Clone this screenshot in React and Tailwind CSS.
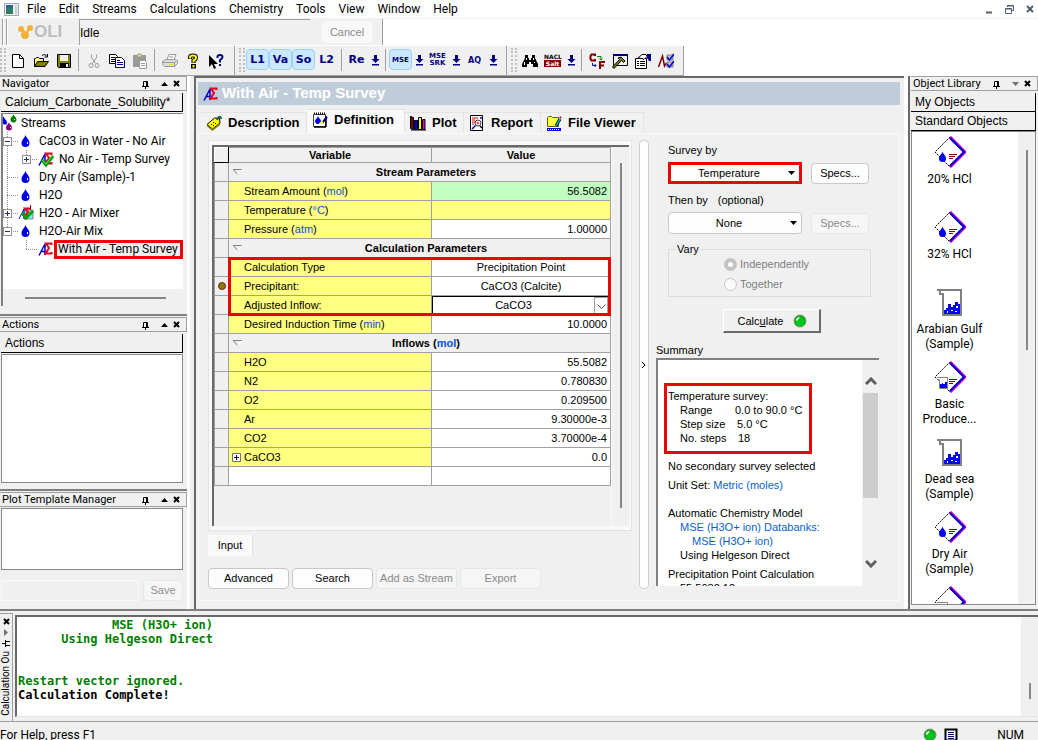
import React from "react";
import clsx from "clsx";

const menus = ["File", "Edit", "Streams", "Calculations", "Chemistry", "Tools", "View", "Window", "Help"];

const uiFont = "font-[Roboto,sans-serif]";
const arial = "font-['Liberation_Sans',Arial,sans-serif]";

/* ---------- small drawings ---------- */

const Svg = ({ w = 16, h = 16, className, children }) => (
  <svg
    width={w}
    height={h}
    viewBox={`0 0 ${w} ${h}`}
    fill="none"
    className={clsx("shrink-0", className)}
    aria-hidden="true"
  >
    {children}
  </svg>
);

const NewIcon = () => (
  <Svg>
    <path d="M2.500 1.500h7l4 4v9h-11z" fill="#fff" stroke="#000" />
    <path d="M9.500 1.500v4h4" stroke="#000" />
  </Svg>
);

const OpenIcon = () => (
  <Svg>
    <path d="M1.5 13.5v-8h1l1-1h2l1 1h4v3" fill="#ffff80" stroke="#000" />
    <path d="M1.5 13.5l3-5h11l-3.500 5z" fill="#808000" stroke="#000" />
    <path d="M9 2.500c2-1.500 4-1 5 1M14.500 1v3h-3" stroke="#000" />
  </Svg>
);

const SaveIcon = () => (
  <Svg>
    <path d="M1.500 1.500h13v13h-12l-1-1z" fill="#808000" stroke="#000" />
    <path d="M4 2h8v6H4z" fill="#f0f0f0" />
    <path d="M4 10h9v4H4z" fill="#000" />
    <path d="M10 11h2v3h-2z" fill="#f0f0f0" />
  </Svg>
);

const CutIcon = () => (
  <Svg>
    <path d="M5.500 1.500v3l4 6M10.500 1.500v3l-4 6" stroke="#9a9a9a" />
    <circle cx="5" cy="12.500" r="2" stroke="#9a9a9a" />
    <circle cx="11" cy="12.500" r="2" stroke="#9a9a9a" />
  </Svg>
);

const CopyIcon = () => (
  <Svg>
    <path d="M.5 1.500h6l2 2v7h-8z" fill="#fff" stroke="#000" />
    <path d="M2 4.500h4M2 6.500h5M2 8.500h4" stroke="#000" />
    <path d="M6.500 4.500h6l3 3v7h-9z" fill="#fff" stroke="#000080" />
    <path d="M8 7.500h3M8 9.500h6M8 11.500h6" stroke="#000080" />
  </Svg>
);

const PasteIcon = () => (
  <Svg>
    <path d="M1 2h13v12H1z" fill="#9a9a9a" />
    <path d="M5 3l1-2h3l1 2v1H5z" fill="#e8e060" stroke="#9a9a9a" />
    <path d="M7.500 7.500h5l2 2v6h-7z" fill="#fff" stroke="#9a9a9a" />
    <path d="M9 10.500h4M9 12.500h4" stroke="#9a9a9a" />
  </Svg>
);

const PrintIcon = () => (
  <Svg>
    <path d="M5 6.500l2-5h7l-2 5" fill="#fff" stroke="#9a9a9a" />
    <path d="M7 4h4" stroke="#9a9a9a" />
    <path d="M.5 8.500l3-2h10l2 1v3l-3 3h-10l-2-2z" fill="#ddd" stroke="#9a9a9a" />
    <path d="M1 9.500h11.500v4M12.500 9.500l2-2" stroke="#9a9a9a" />
    <path d="M7 11h4v1H7z" fill="#e8e000" />
  </Svg>
);

const HelpIcon = () => (
  <Svg>
    <path d="M5 6V4.500Q5 2.500 8 2.500t3 2Q11 6.500 8.500 7.500V10" stroke="#000" strokeWidth="4" />
    <path d="M5 5.500V4.500Q5 2.500 8 2.500t3 2Q11 6.500 8.500 7.500V9.500" stroke="#ffff00" strokeWidth="2" />
    <path d="M6 11h5v4.500H6z" fill="#000" />
    <path d="M7.500 12h2v2.500h-2z" fill="#ffff00" />
  </Svg>
);

const ContextHelpIcon = () => (
  <Svg>
    <path d="M1 2v12l3-3 2 5 2-1-2-4h4z" fill="#000" />
    <path d="M9.500 5V3.500Q9.500 2 12 2t2.500 2q0 1.500-2.500 3v2.500" stroke="#000080" strokeWidth="2" />
    <path d="M11 11h2v2h-2z" fill="#000080" />
  </Svg>
);

const DownArrow = () => (
  <Svg w={9} h={12}>
    <path d="M3 1h3v4h2.500L4.500 9 .5 5H3zM1 10h7v1.500H1z" fill="#000080" />
  </Svg>
);

const BinocularsIcon = () => (
  <Svg>
    <path d="M3 2h3v3h1v2h2V5h1V2h3v3l3 6v3h-5v-3H9V9H7v2H5v3H0v-3l3-6z" fill="#000" />
    <path d="M4.500 5v2M11.500 5v2M2.500 9v3M12.500 9v1" stroke="#fff" />
  </Svg>
);

const ConvertIcon = () => (
  <Svg>
    <path d="M6 3V1.500H2.500L1.500 3v3l1 1.500H6V6" stroke="#800000" strokeWidth="2" />
    <path d="M11 16V9h5M11 12.500h4" stroke="#800000" strokeWidth="2" />
    <path d="M8 3.500h4V7M10.500 5.500L12 7l1.500-1.500" stroke="#008000" />
    <path d="M3.500 10v2.500H7M5.500 11L7 12.500 5.500 14" stroke="#0000ff" />
  </Svg>
);

const HammerIcon = () => (
  <Svg>
    <path d="M1.500 1.500h14v11h-14z" fill="#f0f0f0" stroke="#000" />
    <path d="M1 1h15v2H1z" fill="#000080" />
    <path d="M6 5l3-1 4 4-1.500 1.500-2-2-7.500 8L.5 14l7-7.500z" fill="#808000" stroke="#000" />
  </Svg>
);

const PropertiesIcon = () => (
  <Svg>
    <path d="M.5 5.500h11v10H.5z" fill="#fff" stroke="#000" />
    <path d="M2 8.500h2M5 8.500h5M2 10.500h2M5 10.500h5M2 12.500h2M5 12.500h5" stroke="#000" />
    <path d="M3 5l4-3.500h4l1 2-3 3-2-1z" fill="#fff" stroke="#000" />
    <path d="M12 1h4v7h-2l-2-3z" fill="#000080" />
  </Svg>
);

const ChecksIcon = () => (
  <Svg>
    <path d="M.5 14L4.500 3l2 10 2-3" stroke="#800000" strokeWidth="1.500" />
    <path d="M9 2h6v5H9zM9 9h6v5H9z" fill="#c0c0c0" stroke="#808080" />
    <path d="M9 4l2.500 3L16 1M9 11l2.500 3L16 8" stroke="#0000e0" strokeWidth="1.500" />
  </Svg>
);

const SurveyIcon = ({ checked }) => (
  <Svg>
    <path d="M1 14.500L7 3v11M3 10.500h4" stroke="#0000c8" strokeWidth="1.500" />
    <path d="M13.500 4V2.500H8L11 7l-3.500 5.500h6V11" stroke="#e8001c" strokeWidth="2" />
    {checked && <path d="M4 9l4 5 7-9" stroke="#00a000" strokeWidth="3" />}
    {checked && <path d="M4 9l4 4 6-8" stroke="#60e060" />}
  </Svg>
);

const MixerIcon = () => (
  <Svg>
    <path d="M6 5h9v9H6z" fill="#80e8f0" stroke="#808080" />
    <path d="M1 14L6 4v10M12 5V3.500H7l3 3.500-3 4M12.500 0v4" stroke="#0000c8" />
    <path d="M12 5V3.500H7l3 3.500-3 4h4" stroke="#e8001c" strokeWidth="2" />
    <path d="M4 8l4 5 7-7" stroke="#00a000" strokeWidth="3" />
    <path d="M12.500 0v4" stroke="#800000" />
  </Svg>
);

const DropIcon = () => (
  <Svg>
    <path d="M7.500 1.500c0 3-4 5-4 8.500a4 4 0 008 0c0-3.500-4-5.500-4-8.500z" fill="#0000f0" />
    <path d="M9 9h1v2H9z" fill="#fff" />
  </Svg>
);

const StreamsIcon = () => (
  <Svg w={14} h={18}>
    <path d="M1 3c0 2 3 3 3 5.500S2 11 0 10V3z" fill="#0000f0" />
    <path d="M10.500 0c0 2-3 3-3 5.500a3 3 0 006 0c0-2.500-3-3.500-3-5.500z" fill="#008000" />
    <path d="M6 8c0 2-3 3-3 5.500a3 3 0 006 0C9 11 6 10 6 8z" fill="#800080" />
    <path d="M11 5h1v1h-1zM7 13h1v1H7z" fill="#fff" />
  </Svg>
);

const TagIcon = () => (
  <Svg>
    <path d="M1 9.500L8.500 3l5 .5.5 4.500L6.500 14z" fill="#ffff00" stroke="#000" />
    <path d="M1 10.500l5.500 4.500L14 9" stroke="#808000" strokeWidth="1.500" />
    <path d="M5 9l1 1M7 7l1 1M7 10l1 1M9 8l1 1" stroke="#000" />
    <path d="M11 5c1-4 4-4 4-1" stroke="#206060" strokeWidth="2" />
  </Svg>
);

const NotepadIcon = () => (
  <Svg>
    <path d="M1.500 2.500h12v12h-12z" fill="#fff" stroke="#404040" />
    <path d="M2 1.500h12" stroke="#000" strokeDasharray="1 1" strokeWidth="2" />
    <path d="M2 15h12M14 4v11" stroke="#000" strokeWidth="1.500" />
    <path d="M6 4c0 2-3 3-3 5a3 3 0 006 0c0-2-3-3-3-5z" fill="#0000f0" />
    <path d="M10 11l5-6" stroke="#000080" strokeWidth="2" />
    <path d="M8 10l3-1v3H7z" fill="#ffff00" />
  </Svg>
);

const PlotIcon = () => (
  <Svg>
    <path d="M.5 1.500l3 1v12l-3-1z" fill="#800000" stroke="#000" />
    <path d="M4.500 5.500h3v9h-3z" fill="#0000e0" stroke="#000" />
    <path d="M8.500 2.500h3v12h-3z" fill="#ffff00" stroke="#000" />
    <path d="M12.500 4.500h2.500v10h-2.500z" fill="#e000e0" stroke="#000" />
    <path d="M1 15h15" stroke="#000" />
  </Svg>
);

const ReportIcon = () => (
  <Svg>
    <path d="M1.500.500h12v15h-12z" fill="#fff" stroke="#000" />
    <path d="M3 3h6M3 5h3M3 7h3M3 9h2" stroke="#e00000" />
    <circle cx="9" cy="8" r="3" fill="#fff" stroke="#404040" />
    <circle cx="9" cy="8" r="1.500" fill="#e06060" />
    <path d="M6.500 10.500L3 14M11 3h2" stroke="#0000c0" strokeWidth="1.500" />
    <path d="M11 11l2 2" stroke="#000" strokeWidth="1.500" />
  </Svg>
);

const FolderIcon = () => (
  <Svg>
    <path d="M1.500 11.500v-9l1-1h3l1 1h6v9z" fill="#ffff40" stroke="#606000" />
    <path d="M10 11l4-7" stroke="#000" strokeWidth="3" />
    <path d="M10 11l4-7" stroke="#00c8d8" strokeWidth="1.500" />
    <path d="M14 3l1-1" stroke="#c00000" strokeWidth="2" />
    <path d="M1 13h14v3H1z" fill="#0000e0" />
    <path d="M2 14.500h12" stroke="#fff" strokeDasharray="1 1" />
  </Svg>
);

const GreenLight = () => (
  <Svg w={14} h={14}>
    <circle cx="7" cy="7" r="6" fill="#00b000" stroke="#909090" />
    <circle cx="7" cy="8" r="4" fill="#00c818" />
    <path d="M3 6c0-2 2-3 4-3L4 7z" fill="#fff" />
  </Svg>
);

const LogoMark = () => (
  <Svg w={16} h={16}>
    <path d="M5 5l2 8M7 10l6-7" stroke="#f5b03c" strokeWidth="2" />
    <circle cx="3" cy="5" r="3" fill="#f5b03c" />
    <circle cx="7" cy="11" r="4" fill="#f5b03c" />
    <circle cx="12" cy="4" r="3" fill="#f5b03c" />
  </Svg>
);

const Diamond = ({ beaker }) => (
  <Svg w={32} h={32}>
    <path d="M16 1L1 16l15 15" stroke="#000" strokeDasharray="2 1" />
    <path d="M16 1l15 15-15 15" stroke="#d000d0" strokeWidth="3" />
    <path d="M16 2l14 14-14 14" stroke="#0000c8" strokeWidth="2" />
    {beaker ? (
      <>
        <path d="M3 16.500h10.500v11h-8v-9H3" fill="#fff" stroke="#808080" />
        <path d="M6 23h2v-1h1v1h2v-2h2v6H6z" fill="#0000ff" />
      </>
    ) : (
      <path d="M8.500 15c0 3-3.500 4-3.500 7.500a3.500 3.500 0 007 0C12 19 8.500 18 8.500 15z" fill="#0000f0" />
    )}
    <path d="M15 18.500h8M15 20.500h6M15 22.500h4" stroke="#800000" />
  </Svg>
);

const Beaker = () => (
  <Svg w={32} h={32}>
    <path d="M3 3h25v27H8V9H5V5H3z" fill="#808080" />
    <path d="M7 5h19v23H10V7H7z" fill="#fff" />
    <path d="M10 24h2v-2h2v-4h3v3h2v-2h2v-3h3v2h2v10H10z" fill="#0000ff" />
    <path d="M13 25h1v2h-1zM17 24h2v1h-2zM22 20h2v2h-2zM21 25h2v1h-2z" fill="#fff" />
  </Svg>
);

const PinIcon = () => (
  <Svg w={7} h={8}>
    <path d="M1.500 5V.500h4V5M0 5.500h7M3.500 6v2M4.500 1v4" stroke="#000" />
  </Svg>
);

const CloseIcon = () => (
  <Svg w={7} h={7}>
    <path d="M1 1l5 5M6 1L1 6" stroke="#000" strokeWidth="2" />
  </Svg>
);

const Triangle = ({ down, gray }) => (
  <Svg w={7} h={4}>
    <path d={down ? "M0 0h7L3.500 4z" : "M0 4h7L3.500 0z"} fill={gray ? "#707070" : "#000"} />
  </Svg>
);

const Expander = ({ className }) => (
  <Svg w={9} h={9} className={className}>
    <path d="M.5.500h8v8h-8z" fill="#fff" stroke="#707070" />
    <path d="M2 4.500h5M4.500 2v5" stroke="#000080" />
  </Svg>
);

/* ---------- docks ---------- */

const PanelTitle = ({ title, down }) => (
  <div className="flex h-[15px] shrink-0 items-center border border-l-0 border-[#a0a0a0] pl-0.5 pr-1.5">
    <h2 className={clsx("flex-1 whitespace-nowrap text-[11px] leading-3", uiFont)}>{title}</h2>
    <button type="button" aria-label="Pin" className="mt-0.5">
      <PinIcon />
    </button>
    <button type="button" aria-label="Minimize" className="ml-3">
      <Triangle down={down} gray={down} />
    </button>
    <button type="button" aria-label="Close" className="ml-[5px]">
      <CloseIcon />
    </button>
  </div>
);

const BarHeader = ({ children }) => (
  <div
    className={clsx(
      "h-[19px] shrink-0 overflow-hidden whitespace-nowrap border-b border-r border-b-black border-r-black pl-1 text-[12px] leading-[18px]",
      arial
    )}
  >
    {children}
  </div>
);

// Dotted connector lines, with an optional +/- box on the joint
const Branch = ({ w, x, sign, last, stub = true }) => (
  <Svg w={w} h={18}>
    <path d={`M${x}.5 0V${last ? 9 : 18}`} stroke="#909090" strokeDasharray="1 1" />
    {stub && <path d={`M${x} 9.500H${w}`} stroke="#909090" strokeDasharray="1 1" />}
    {sign && (
      <>
        <rect x={x - 4 + 0.5} y="5.500" width="8" height="8" fill="#fff" stroke="#909090" />
        <path
          d={`M${x - 2} 9.500h5${sign === "+" ? `M${x}.5 7v5` : ""}`}
          stroke="#203080"
        />
      </>
    )}
  </Svg>
);

const tree = [
  { label: "CaCO3 in Water - No Air", level: 1, sign: "-", icon: <DropIcon /> },
  { label: "No Air - Temp Survey", level: 2, sign: "+", icon: <SurveyIcon checked /> },
  { label: "Dry Air (Sample)-1", level: 1, icon: <DropIcon /> },
  { label: "H2O", level: 1, icon: <DropIcon /> },
  { label: "H2O - Air Mixer", level: 1, sign: "+", icon: <MixerIcon /> },
  { label: "H2O-Air Mix", level: 1, sign: "-", last: true, icon: <DropIcon /> },
];

const Navigator = () => (
  <section className="flex flex-col">
    <PanelTitle title="Navigator" />
    <div className="mr-1 flex flex-col pl-px pt-0.5">
      <BarHeader>Calcium_Carbonate_Solubility*</BarHeader>
      <div className="mt-px h-[193px] border-l-2 border-t border-[#808080] bg-white">
        <ul className={clsx("h-[175px] overflow-hidden text-[12px] leading-[18px]", uiFont)}>
          <li className="flex h-[18px] items-center whitespace-nowrap">
            <StreamsIcon />
            <span className="pl-1">Streams</span>
          </li>
          {tree.map((node) => (
            <li key={node.label} className="flex h-[18px] items-center whitespace-nowrap">
              {node.level === 2 && <Branch w={15} x={4} stub={false} />}
              <Branch
                w={node.level === 2 ? 20 : 15}
                x={node.level === 2 ? 8 : 4}
                sign={node.sign}
                last={node.last || node.level === 2}
              />
              {node.icon}
              <span className="pl-[5px]">{node.label}</span>
            </li>
          ))}
          <li className="flex h-[18px] items-center whitespace-nowrap">
            <span className="w-[15px] shrink-0" />
            <Branch w={20} x={8} last />
            <SurveyIcon />
            <span className="h-[19px] flex-1 border-[3px] border-[#ea0606] bg-[#f0f0f0] pl-px leading-[13px]">
              With Air - Temp Survey
            </span>
          </li>
        </ul>
        <div className="flex h-[17px] items-center bg-[#f0f0f0] pl-[22px] pr-[17px]">
          <div className="h-0.5 flex-1 bg-[#858585]" />
        </div>
      </div>
    </div>
  </section>
);

const LeftDock = () => (
  <aside className="flex w-[187px] shrink-0 flex-col">
    <Navigator />
    <section className="mt-2 flex flex-1 flex-col border-t-2 border-[#808080] pt-px">
      <PanelTitle title="Actions" />
      <div className="mb-1.5 mr-1 flex flex-1 flex-col pl-px pt-0.5">
        <BarHeader>Actions</BarHeader>
        <div className="mt-px flex-1 border border-[#828790] bg-white" />
      </div>
    </section>
    <section className="flex flex-col border-t-2 border-[#808080] pt-px">
      <PanelTitle title="Plot Template Manager" />
      <div className="mr-1 pl-px pt-px">
        <div className="h-[62px] border border-[#828790] bg-white" />
        <form className="mb-2 mt-2.5 flex gap-1">
          <input
            disabled
            aria-label="Template name"
            className="h-[21px] min-w-0 flex-1 border border-[#fafafa] bg-[#f0f0f0]"
          />
          <button
            type="button"
            disabled
            className={clsx(
              "h-[21px] w-10 rounded border border-[#e8e8e8] bg-[#f6f6f6] text-[11px] text-[#909090]",
              arial
            )}
          >
            Save
          </button>
        </form>
      </div>
    </section>
  </aside>
);

const libraryItems = [
  { label: "20% HCl", icon: <Diamond /> },
  { label: "32% HCl", icon: <Diamond /> },
  { label: "Arabian Gulf (Sample)", icon: <Beaker /> },
  { label: "Basic Produce...", icon: <Diamond beaker /> },
  { label: "Dead sea (Sample)", icon: <Beaker /> },
  { label: "Dry Air (Sample)", icon: <Diamond /> },
  { label: "", icon: <Diamond beaker /> },
];

const ObjectLibrary = () => (
  <aside className="flex w-[130px] shrink-0 flex-col border-l-2 border-[#696969] pb-1 pl-px">
    <PanelTitle title="Object Library" down />
    <div className="mr-0.5 flex min-h-0 flex-1 flex-col pt-0.5">
      <BarHeader>My Objects</BarHeader>
      <BarHeader>Standard Objects</BarHeader>
      <div className="flex min-h-0 flex-1 border border-[#828790] bg-white">
        <ul className={clsx("min-h-0 flex-1 overflow-hidden pt-1 text-[12px] leading-[15px]", uiFont)}>
          {libraryItems.map((item, i) => (
            <li key={i} className="flex h-[75px] w-[75px] flex-col items-center gap-1 text-center">
              {item.icon}
              <span>{item.label}</span>
            </li>
          ))}
        </ul>
        <div className="flex w-[17px] justify-center bg-[#f0f0f0] pt-[18px]">
          <div className="h-[200px] w-0.5 bg-[#858585]" />
        </div>
      </div>
    </div>
  </aside>
);

/* ---------- toolbars ---------- */

const Grip = () => (
  <div className="flex w-[11px] shrink-0 items-center gap-0.5 pl-1">
    <span className="h-6 border-l-2 border-dotted border-[#c0c0c0]" />
    <span className="h-6 border-l-2 border-dotted border-[#c0c0c0]" />
  </div>
);

const Sep = () => (
  <div className="flex w-[7px] shrink-0 items-center justify-center">
    <span className="h-[22px] w-px bg-[#a0a0a0]" />
  </div>
);

const Tool = ({ label, pressed, size = "pt-0.5 text-[11px]", children }) => (
  <button
    type="button"
    aria-label={label}
    className={clsx(
      "flex h-[21px] w-[23px] shrink-0 items-center justify-center font-['DejaVu_Sans',sans-serif] font-bold text-[#000080]",
      size,
      pressed && "rounded-sm border border-[#99d1ff] bg-[#cce8ff]"
    )}
  >
    {children}
  </button>
);

const ArrowTool = () => (
  <button type="button" aria-label="More" className="flex w-[14px] shrink-0 items-center justify-center">
    <DownArrow />
  </button>
);

const toolGroup = "flex items-center border-b border-r border-[#a0a0a0] bg-[#f0f0f0] pb-0.5";

const ToolBar = () => (
  <div className="flex h-[31px] shrink-0 bg-white pt-px">
    <div className={clsx(toolGroup, "pr-[7px]")}>
      <div className="flex w-1.5 shrink-0 gap-0.5">
        <span className="h-6 border-l-2 border-dotted border-[#c0c0c0]" />
        <span className="h-6 border-l-2 border-dotted border-[#c0c0c0]" />
      </div>
      <Tool label="New"><NewIcon /></Tool>
      <Tool label="Open"><OpenIcon /></Tool>
      <Tool label="Save"><SaveIcon /></Tool>
      <Sep />
      <Tool label="Cut"><CutIcon /></Tool>
      <Tool label="Copy"><CopyIcon /></Tool>
      <Tool label="Paste"><PasteIcon /></Tool>
      <Sep />
      <Tool label="Print"><PrintIcon /></Tool>
      <Tool label="Help"><HelpIcon /></Tool>
      <Tool label="Context help"><ContextHelpIcon /></Tool>
    </div>
    <div className={clsx(toolGroup, "pr-1.5")}>
      <Grip />
      <Tool pressed>L1</Tool>
      <Tool pressed>Va</Tool>
      <Tool pressed>So</Tool>
      <Tool>L2</Tool>
      <Sep />
      <Tool>Re</Tool>
      <ArrowTool />
      <Sep />
      <Tool pressed size="pt-0.5 text-[7px]">MSE</Tool>
      <ArrowTool />
      <Tool size="text-[7px] leading-[7px]">
        <span>
          MSE
          <br />
          SRK
        </span>
      </Tool>
      <ArrowTool />
      <Tool size="pt-0.5 text-[8px]">AQ</Tool>
      <ArrowTool />
    </div>
    <div className={clsx(toolGroup, "pr-1.5")}>
      <Grip />
      <Tool label="Find"><BinocularsIcon /></Tool>
      <Tool size="text-[6px] leading-[7px]">
        <span className="flex w-[17px] flex-col text-center">
          <span className="text-black">NACL</span>
          <span className="bg-[#800000] text-white">Salt</span>
        </span>
      </Tool>
      <ArrowTool />
      <Sep />
      <Tool label="Units"><ConvertIcon /></Tool>
      <Tool label="Tools"><HammerIcon /></Tool>
      <Tool label="Properties"><PropertiesIcon /></Tool>
      <Tool label="Verify"><ChecksIcon /></Tool>
    </div>
  </div>
);

const MenuBar = () => (
  <header className={clsx("flex h-[18px] shrink-0 items-center bg-white px-1 text-[12px] leading-[17px]", uiFont)}>
    <Svg w={15} h={13}>
      <path d="M.5.500h14v12H.500z" fill="#f0f0f0" stroke="#a0a8b8" />
      <path d="M2 2h7v9H2z" fill="#308060" />
      <path d="M2 2h7v3H2z" fill="#3060a0" />
      <path d="M11 2h2v9h-2z" fill="#c0d0e0" />
    </Svg>
    <nav className="flex flex-1 gap-[13px] pl-2">
      {menus.map((m) => (
        <button key={m} type="button">
          {m}
        </button>
      ))}
    </nav>
    <div className="flex items-center gap-3">
      <button type="button" aria-label="Minimize">
        <Svg w={8} h={9}><path d="M1 7.500h6" stroke="#506070" strokeWidth="2" /></Svg>
      </button>
      <button type="button" aria-label="Restore">
        <Svg w={9} h={9}>
          <path d="M2.500 2V.500h6v5H7M.5 3.500h6v5h-6zM2 1h7M0 4h7" stroke="#506070" />
        </Svg>
      </button>
      <button type="button" aria-label="Close">
        <Svg w={8} h={8}><path d="M1 1l6 6M7 1L1 7" stroke="#506070" strokeWidth="2" /></Svg>
      </button>
    </div>
  </header>
);

const StatusStrip = () => (
  <div className="flex h-[27px] shrink-0 border-t border-[#f0f0f0] bg-white">
    <div className={clsx("flex w-[383px] items-center border-r border-[#a0a0a0] bg-[#f0f0f0]", arial)}>
      <span className="ml-0.5 h-full w-0.5 border-l border-[#a0a0a0] bg-white" />
      <span className="ml-0.5 h-full w-0.5 border-l border-[#a0a0a0] bg-white" />
      <span className="flex w-[71px] items-center pl-2.5">
        <LogoMark />
        <span className="text-[17px] font-bold leading-4 text-[#bdbdbd]">OLI</span>
      </span>
      <output className="flex h-full flex-1 items-center border-l border-t border-[#a0a0a0] text-[12px]">
        Idle
      </output>
      <button
        type="button"
        disabled
        className="ml-3 mr-2.5 h-[22px] w-[50px] rounded bg-[#f9f9f9] text-[11px] text-[#8a8a8a]"
      >
        Cancel
      </button>
    </div>
  </div>
);

/* ---------- definition grid ---------- */

const Unit = ({ children }) => <span className="text-[#0a4fdc]">{children}</span>;

const rows = [
  { section: "Stream Parameters" },
  { name: "Stream Amount", unit: "mol", value: "56.5082", tone: "green" },
  { name: "Temperature", unit: "°C", value: "", tone: "yellow" },
  { name: "Pressure", unit: "atm", value: "1.00000" },
  { section: "Calculation Parameters" },
  { name: "Calculation Type", value: "Precipitation Point", center: true },
  { name: "Precipitant:", value: "CaCO3 (Calcite)", center: true, dot: true },
  { name: "Adjusted Inflow:", value: "CaCO3", select: true },
  { name: "Desired Induction Time", unit: "min", value: "10.0000" },
  { section: "Inflows", unit: "mol" },
  { name: "H2O", value: "55.5082" },
  { name: "N2", value: "0.780830" },
  { name: "O2", value: "0.209500" },
  { name: "Ar", value: "9.30000e-3" },
  { name: "CO2", value: "3.70000e-4" },
  { name: "CaCO3", value: "0.0", expand: true },
];

const cell = "h-[19px] border border-[#a0a0a0] p-0";

const GridRow = ({ row }) => {
  if (row.section) {
    return (
      <tr>
        <td className={cell} />
        <th colSpan={2} scope="colgroup" className={cell}>
          <span className="flex items-center pl-1">
            <Svg w={9} h={6}>
              <path d="M0 .5h9M.5.500L4.500 5.500" stroke="#808080" />
              <path d="M9 .5L4.500 5.500" stroke="#fff" />
            </Svg>
            <span className="flex-1">
              {row.section}
              {row.unit && <> (<Unit>{row.unit}</Unit>)</>}
            </span>
          </span>
        </th>
      </tr>
    );
  }
  return (
    <tr>
      <td className={cell}>
        {row.dot && (
          <span className="mx-auto block h-2 w-2 rounded-full border border-[#802020] bg-[#808000]" />
        )}
      </td>
      <th scope="row" className={clsx(cell, "bg-[#ffff80] text-left font-normal")}>
        <span className="flex items-center">
          <span className="flex w-[15px] shrink-0 pl-[3px]">{row.expand && <Expander />}</span>
          <span>
            {row.name}
            {row.unit && <> (<Unit>{row.unit}</Unit>)</>}
          </span>
        </span>
      </th>
      <td
        className={clsx(
          cell,
          row.center ? "text-center" : "text-right",
          row.tone === "green" && "bg-[#c0ffc0]",
          row.tone === "yellow" && "bg-[#ffff80]",
          !row.tone && "bg-white"
        )}
      >
        {row.select ? (
          <span className="flex h-[18px] border-l border-t border-black">
            <select
              aria-label={row.name}
              className="h-4 min-w-0 flex-1 appearance-none text-center leading-4 outline-none"
            >
              <option>{row.value}</option>
            </select>
            <span className="mr-0.5 flex w-3.5 items-center justify-center border border-[#a0a0a0] pt-0.5">
              <Svg w={9} h={5}><path d="M.5.500l4 4 4-4" stroke="#505050" /></Svg>
            </span>
          </span>
        ) : (
          <span className={row.center ? "" : "pr-[3px]"}>{row.value}</span>
        )}
      </td>
    </tr>
  );
};

const DefinitionGrid = () => (
  <div className="flex min-w-0 flex-1 flex-col">
    <div className="flex flex-1 flex-col border border-[#e3e3e3] bg-[#f9f9f9] py-1 pl-[3px] pr-0.5">
      <div className="flex flex-1 border-l-2 border-t-2 border-[#696969] bg-[#f0f0f0]">
        <div className="relative flex-1 self-start">
          <table className={clsx("w-full table-fixed border-collapse text-[11px] leading-[14px]", arial)}>
            <colgroup>
              <col className="w-[14px]" />
              <col className="w-[203px]" />
              <col />
            </colgroup>
            <thead>
              <tr>
                <th className="h-[15px] border border-l-white border-t-white border-b-black border-r-black p-0" />
                <th scope="col" className="h-[15px] border border-[#a0a0a0] p-0">Variable</th>
                <th scope="col" className="h-[15px] border border-[#a0a0a0] p-0">Value</th>
              </tr>
            </thead>
            <tbody>
              {rows.map((row) => (
                <GridRow key={row.section || row.name} row={row} />
              ))}
              <tr>
                <td className={cell} />
                <td className={clsx(cell, "bg-white")} />
                <td className={clsx(cell, "bg-white")} />
              </tr>
            </tbody>
          </table>
          {/* highlight around the precipitation rows */}
          <div className="pointer-events-none absolute left-3.5 right-0 top-[110px] h-[59px] border-[3px] border-[#ea0606]" />
        </div>
        <div className="flex w-[18px] justify-center border-l border-[#fafafa] pb-[18px] pt-4">
          <div className="w-0.5 bg-[#858585]" />
        </div>
      </div>
    </div>
    <div>
      <button
        type="button"
        className={clsx("h-[21px] w-[45px] border-r border-[#e3e3e3] bg-[#f9f9f9] text-[11px]", arial)}
      >
        Input
      </button>
    </div>
    <div className="mt-3 flex gap-[3px]">
      <Button className="w-[81px]">Advanced</Button>
      <Button className="w-[81px]">Search</Button>
      <Button className="w-[81px]" disabled>Add as Stream</Button>
      <Button className="w-[81px]" disabled>Export</Button>
    </div>
  </div>
);

const Button = ({ className, disabled, children }) => (
  <button
    type="button"
    disabled={disabled}
    className={clsx(
      "h-[21px] whitespace-nowrap rounded border text-[11px]",
      disabled ? "border-[#e6e6e6] bg-[#f6f6f6] text-[#8a8a8a]" : "border-[#c8c8c8] bg-[#fdfdfd]",
      arial,
      className
    )}
  >
    {children}
  </button>
);

/* ---------- survey form ---------- */

const Select = ({ id, value, highlight }) => (
  <div
    className={clsx(
      "relative flex h-[22px] w-[134px] bg-[#fdfdfd]",
      highlight ? "border-[3px] border-[#ea0606]" : "rounded border border-[#c8c8c8]"
    )}
  >
    <select id={id} className="w-full appearance-none pr-3 text-center outline-none">
      <option>{value}</option>
    </select>
    <span className="pointer-events-none absolute inset-y-0 right-1 flex items-center">
      <Triangle down />
    </span>
  </div>
);

const SummaryBox = () => (
  <div className="flex min-h-0 flex-1 overflow-hidden border-l-2 border-t-2 border-[#808080] bg-white">
    <div className="min-w-0 flex-1 overflow-hidden whitespace-nowrap pl-1.5 pt-[23px] text-[11px] leading-[14px]">
      <div className="w-[148px] border-[3px] border-[#ea0606] pb-[6px] pl-px pt-[3px]">
        <p>Temperature survey:</p>
        <dl className="grid grid-cols-[55px_1fr] pl-3">
          <dt>Range</dt>
          <dd>0.0 to 90.0 °C</dd>
          <dt>Step size</dt>
          <dd className="pl-0.5">5.0 °C</dd>
          <dt>No. steps</dt>
          <dd className="pl-[3px]">18</dd>
        </dl>
      </div>
      <div className="pl-1">
        <p className="mt-[5px]">No secondary survey selected</p>
        <p className="mt-[5px]">
          Unit Set: <a href="#units" className="text-[#0a5fd0]">Metric (moles)</a>
        </p>
        <p className="mt-3.5">Automatic Chemistry Model</p>
        <p className="pl-3 text-[#0a5fd0]">MSE (H3O+ ion) Databanks:</p>
        <p className="pl-6 text-[#0a5fd0]">MSE (H3O+ ion)</p>
        <p className="pl-3">Using Helgeson Direct</p>
        <p className="mt-[5px]">Precipitation Point Calculation</p>
        <p className="pl-3">55.5082 12</p>
      </div>
    </div>
    <div className="flex w-[17px] flex-col items-center bg-[#f0f0f0] pb-[18px] pt-[17px]">
      <Svg w={12} h={8}><path d="M1 7l5-5 5 5" stroke="#606060" strokeWidth="3" /></Svg>
      <div className="mt-2 h-[105px] w-[15px] bg-[#cdcdcd]" />
      <span className="flex-1" />
      <Svg w={12} h={8}><path d="M1 1l5 5 5-5" stroke="#606060" strokeWidth="3" /></Svg>
    </div>
  </div>
);

const SurveyForm = () => (
  <form className={clsx("flex w-[223px] shrink-0 flex-col pt-[3px] text-[11px] leading-[14px]", arial)}>
    <div className="pl-3">
      <label htmlFor="survey-by" className="block">Survey by</label>
      <div className="mt-[5px] flex items-center gap-[9px]">
        <Select id="survey-by" value="Temperature" highlight />
        <Button className="w-[58px]">Specs...</Button>
      </div>
      <label htmlFor="then-by" className="mt-[9px] flex gap-2.5">
        <span>Then by</span>
        <span>(optional)</span>
      </label>
      <div className="mt-[5px] flex items-center gap-[9px]">
        <Select id="then-by" value="None" />
        <Button className="w-[58px]" disabled>Specs...</Button>
      </div>
      <fieldset className="mt-2.5 h-[53px] w-[203px] border border-[#dcdcdc] pl-[55px] text-[#808080]">
        <legend className="-ml-12 px-px leading-[10px] text-black">Vary</legend>
        <label className="flex h-5 items-center gap-[3px]">
          <input
            type="radio"
            name="vary"
            disabled
            defaultChecked
            className="h-[13px] w-[13px] appearance-none rounded-full border-4 border-[#c3c3c3] bg-white"
          />
          Independently
        </label>
        <label className="flex h-5 items-center gap-[3px]">
          <input
            type="radio"
            name="vary"
            disabled
            className="h-[13px] w-[13px] appearance-none rounded-full border border-[#c8c8c8] bg-[#fafafa]"
          />
          Together
        </label>
      </fieldset>
    </div>
    <button
      type="button"
      className="ml-[67px] mt-3 flex h-6 w-[98px] items-center justify-center gap-2.5 border-b-2 border-l border-r-2 border-t border-b-[#696969] border-l-white border-r-[#696969] border-t-white bg-[#f0f0f0] pl-0.5"
    >
      <span>Calc<u>u</u>late</span>
      <GreenLight />
    </button>
    <h3 className="mb-px mt-2.5">Summary</h3>
    <SummaryBox />
  </form>
);

/* ---------- document ---------- */

const tabs = [
  { label: "Description", icon: <TagIcon />, width: "w-[106px]" },
  { label: "Definition", icon: <NotepadIcon />, width: "w-[98px]", active: true },
  { label: "Plot", icon: <PlotIcon />, width: "w-[59px]" },
  { label: "Report", icon: <ReportIcon />, width: "w-[77px]" },
  { label: "File Viewer", icon: <FolderIcon />, width: "w-[103px]" },
];

const Document = () => (
  <main className="ml-1 flex min-w-0 flex-1 flex-col border-l-2 border-t-2 border-[#696969] bg-[#f0f0f0] pl-0.5 pr-1 pt-1">
    <div className="flex h-[23px] shrink-0 items-center gap-[3px] bg-[#bfcddb] pl-[5px]">
      <SurveyIcon />
      <h1 className={clsx("text-[15px] font-bold text-white", arial)}>With Air - Temp Survey</h1>
    </div>
    <div role="tablist" className="mt-1 flex h-6 shrink-0 items-end pl-[3px]">
      {tabs.map((tab) => (
        <button
          key={tab.label}
          type="button"
          role="tab"
          aria-selected={!!tab.active}
          className={clsx(
            "flex items-center gap-1.5 whitespace-nowrap border-r border-t border-[#e3e3e3] pl-[5px] text-[13px] font-bold",
            arial,
            tab.width,
            tab.active ? "h-6 bg-[#f9f9f9] pb-1" : "h-[21px] bg-[#f2f2f2]"
          )}
        >
          {tab.icon}
          {tab.label}
        </button>
      ))}
    </div>
    <div className="mb-2 flex min-h-0 flex-1 border border-[#fafafa] pb-[11px] pl-[9px] pr-5 pt-1.5">
      <DefinitionGrid />
      <button
        type="button"
        aria-label="Collapse"
        className="ml-[7px] mr-[7px] flex w-[10px] shrink-0 items-center justify-center rounded border border-[#cfcfcf] bg-[#fdfdfd]"
      >
        <Svg w={4} h={8}><path d="M0 1l3 3-3 3" stroke="#000" /></Svg>
      </button>
      <div className="flex pb-[3px]">
        <SurveyForm />
      </div>
    </div>
  </main>
);

const OutputPanel = () => (
  <section className="flex h-[112px] shrink-0 border-t-2 border-[#808080] pt-0.5">
    <div className="flex w-[13px] shrink-0 flex-col items-center gap-1 border-r border-t border-[#a0a0a0] pt-1">
      <CloseIcon />
      <Svg w={4} h={7}><path d="M0 0v7l4-3.500z" fill="#707070" /></Svg>
      <Svg w={8} h={7}><path d="M8 1.500H3.500v4H8M3.500 0v7M0 3.500h3" stroke="#000" /></Svg>
      <h2 className={clsx("rotate-180 whitespace-nowrap text-[10px] leading-3 [writing-mode:vertical-rl]", uiFont)}>
        Calculation Ou
      </h2>
    </div>
    <div className="mb-1 ml-0.5 mt-0.5 flex min-w-0 flex-1 border-b border-l-2 border-t-2 border-b-[#e3e3e3] border-l-[#696969] border-t-[#696969] bg-white">
      <pre className="flex-1 overflow-hidden pl-px pt-px font-['DejaVu_Sans_Mono',monospace] text-[12px] font-bold leading-[14px] text-[#008000]">
        {"             MSE (H3O+ ion)\n      Using Helgeson Direct\n\n\nRestart vector ignored.\n"}
        <span className="text-black">Calculation Complete!</span>
      </pre>
      <div className="flex w-[17px] justify-center bg-[#f0f0f0] pt-[66px]">
        <div className="h-4 w-0.5 bg-[#858585]" />
      </div>
    </div>
  </section>
);

export default function App() {
  return (
    <div className="flex h-screen flex-col overflow-hidden bg-[#f0f0f0] text-black">
      <MenuBar />
      <StatusStrip />
      <ToolBar />
      <div className="flex min-h-0 flex-1">
        <LeftDock />
        <div className="w-[3px] shrink-0 bg-white" />
        <Document />
        <div className="w-1 shrink-0 bg-white" />
        <ObjectLibrary />
      </div>
      <OutputPanel />
      <footer
        className={clsx(
          "flex h-[19px] shrink-0 items-start overflow-hidden border-t border-[#a0a0a0] pt-1 text-[12px] leading-[18px]",
          uiFont
        )}
      >
        <span className="flex-1">For Help, press F1</span>
        <span className="flex items-center gap-1.5 pr-3.5">
          <GreenLight />
          <Svg>
            <path d="M2.500 2.500h11v11h-11z" fill="#fff" stroke="#000" strokeWidth="2" />
            <path d="M5 5.500h6M5 7.500h6M5 9.500h6M5 11.500h6" stroke="#000060" />
          </Svg>
          <span className="pl-8">NUM</span>
        </span>
      </footer>
    </div>
  );
}
